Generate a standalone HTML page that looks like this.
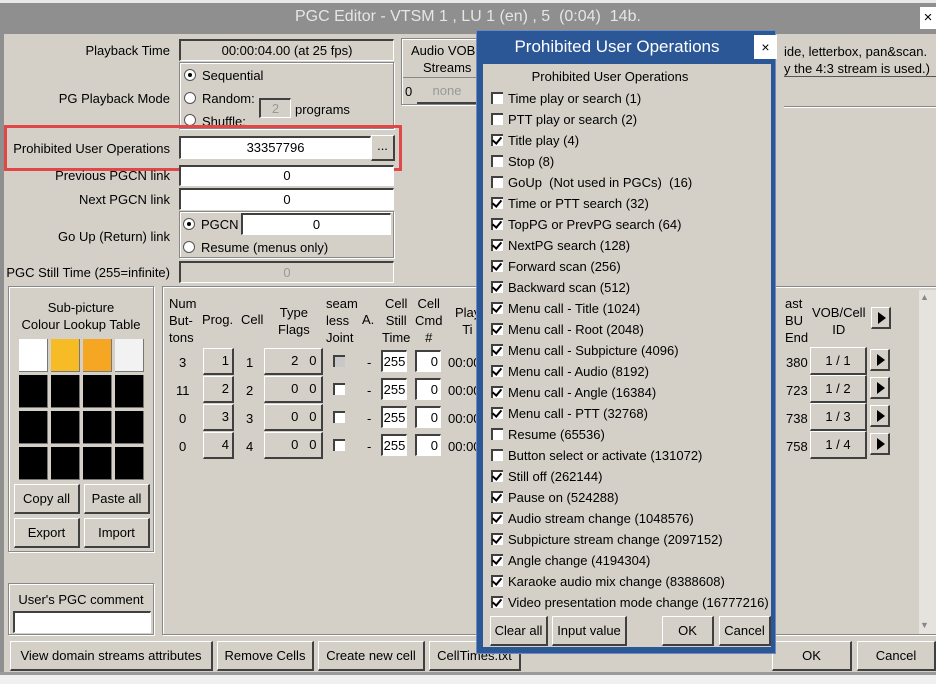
<!DOCTYPE html>
<html><head><meta charset="utf-8">
<style>
*{box-sizing:border-box;margin:0;padding:0}
body{width:936px;height:684px;overflow:hidden;background:#8f8f8f;font-family:"Liberation Sans",sans-serif;font-size:13px;color:#000;position:relative}
.a{position:absolute;white-space:nowrap}
.body{position:absolute;left:4px;top:34px;width:932px;height:638px;background:#d4d0c8}
.lbl{position:absolute;text-align:right;width:170px;left:0}
.sunk{position:absolute;border-top:2px solid #404040;border-left:2px solid #404040;border-right:1px solid #fff;border-bottom:1px solid #fff;text-align:center}
.wh{background:#fff}
.grp{position:absolute;border:1px solid #888;box-shadow:inset 1px 1px 0 #fff,1px 1px 0 #fff}
.btn{position:absolute;background:#d4d0c8;border-top:1px solid #fff;border-left:1px solid #fff;border-right:2px solid #404040;border-bottom:2px solid #404040;text-align:center}
.rad{position:absolute;width:12px;height:12px;border-radius:50%;background:#fff;border:1px solid #555}
.rad.on::after{content:"";position:absolute;left:3px;top:3px;width:4px;height:4px;border-radius:50%;background:#000}
.cb{position:absolute;width:12px;height:12px;background:#fff;border-top:2px solid #404040;border-left:2px solid #404040}
.cb.on::after{content:"";position:absolute;left:1px;top:-1px;width:4px;height:7px;border-right:2px solid #000;border-bottom:2px solid #000;transform:rotate(40deg)}
.sw{position:absolute;width:29px;height:33px;background:#000;border-right:1px solid #777;border-bottom:1px solid #777}
.arr{position:absolute;width:20px;height:22px;background:#d4d0c8;border-top:1px solid #fff;border-left:1px solid #fff;border-right:2px solid #404040;border-bottom:2px solid #404040}
.arr::after{content:"";position:absolute;left:6px;top:4px;border-left:8px solid #000;border-top:6px solid transparent;border-bottom:6px solid transparent}
</style></head><body>
<div class="a" style="left:0;top:0;width:936px;height:3px;background:#e8e8e8"></div>
<div class="a" style="left:295px;top:8px;font-size:16px;color:#e6e6e6">PGC Editor - VTSM 1 , LU 1 (en) , 5&nbsp; (0:04)&nbsp; 14b.</div>
<div class="a" style="left:920px;top:7px;width:16px;height:22px;background:#fff;font-size:15px;text-align:center;line-height:22px">×</div>
<div class="body"></div>
<div class="a" style="left:0;top:672px;width:936px;height:12px;background:#f0f0f0;border-top:3px solid #9a9a9a"></div>

<div class="lbl" style="top:43px">Playback Time</div>
<div class="sunk" style="left:179px;top:39px;width:215px;height:22px;line-height:19px">00:00:04.00 (at 25 fps)</div>
<div class="grp" style="left:179px;top:62px;width:215px;height:67px"></div>
<div class="lbl" style="top:91px">PG Playback Mode</div>
<div class="rad on" style="left:184px;top:69px"></div><div class="a" style="left:202px;top:68px">Sequential</div>
<div class="rad" style="left:184px;top:92px"></div><div class="a" style="left:202px;top:91px">Random:</div>
<div class="sunk" style="left:259px;top:98px;width:32px;height:20px;color:#999;line-height:17px">2</div>
<div class="a" style="left:295px;top:102px">programs</div>
<div class="rad" style="left:184px;top:114px"></div><div class="a" style="left:202px;top:114px;height:12px;overflow:hidden">Shuffle:</div>

<div class="lbl" style="top:141px">Prohibited User Operations</div>
<div class="sunk wh" style="left:179px;top:136px;width:192px;height:23px;line-height:20px">33357796</div>
<div class="btn" style="left:371px;top:135px;width:24px;height:26px;line-height:20px">...</div>
<div class="a" style="left:4px;top:125px;width:398px;height:46px;border:3px solid #e04848"></div>

<div class="lbl" style="top:168px;height:13px;overflow:hidden">Previous PGCN link</div>
<div class="sunk wh" style="left:179px;top:165px;width:215px;height:21px;line-height:17px">0</div>
<div class="lbl" style="top:192px">Next PGCN link</div>
<div class="sunk wh" style="left:179px;top:188px;width:215px;height:22px;line-height:19px">0</div>
<div class="grp" style="left:179px;top:211px;width:215px;height:47px"></div>
<div class="lbl" style="top:229px">Go Up (Return) link</div>
<div class="rad on" style="left:183px;top:218px"></div><div class="a" style="left:201px;top:217px">PGCN</div>
<div class="sunk wh" style="left:241px;top:213px;width:150px;height:22px;line-height:19px">0</div>
<div class="rad" style="left:183px;top:241px"></div><div class="a" style="left:201px;top:240px">Resume (menus only)</div>
<div class="lbl" style="top:265px">PGC Still Time (255=infinite)</div>
<div class="sunk" style="left:179px;top:261px;width:215px;height:22px;color:#999;line-height:19px">0</div>

<div class="grp" style="left:401px;top:38px;width:76px;height:67px"></div>
<div class="a" style="left:411px;top:43px">Audio VOB</div>
<div class="a" style="left:423px;top:60px">Streams</div>
<div class="a" style="left:403px;top:77px;width:74px;border-top:1px solid #888"></div>
<div class="a" style="left:405px;top:84px">0</div>
<div class="a" style="left:417px;top:79px;width:60px;height:25px;border-bottom:2px solid #404040;color:#999;text-align:center;line-height:24px">none</div>

<div class="a" style="left:784px;top:44px">ide, letterbox, pan&amp;scan.</div>
<div class="a" style="left:784px;top:61px">y the 4:3 stream is used.)</div>
<div class="a" style="left:784px;top:76px;width:152px;border-top:1px solid #555"></div>
<div class="a" style="left:784px;top:106px;width:152px;border-top:1px solid #888;box-shadow:0 1px 0 #fff"></div>

<div class="grp" style="left:8px;top:286px;width:146px;height:266px"></div>
<div class="a" style="left:8px;top:299px;width:146px;text-align:center;line-height:17px">Sub-picture<br>Colour Lookup Table</div>
<div class="sw" style="left:19px;top:339px;background:#fff"></div>
<div class="sw" style="left:51px;top:339px;background:#f7bb26"></div>
<div class="sw" style="left:83px;top:339px;background:#f5a623"></div>
<div class="sw" style="left:115px;top:339px;background:#f2f2f2"></div>
<div class="sw" style="left:19px;top:375px"></div><div class="sw" style="left:51px;top:375px"></div><div class="sw" style="left:83px;top:375px"></div><div class="sw" style="left:115px;top:375px"></div>
<div class="sw" style="left:19px;top:411px"></div><div class="sw" style="left:51px;top:411px"></div><div class="sw" style="left:83px;top:411px"></div><div class="sw" style="left:115px;top:411px"></div>
<div class="sw" style="left:19px;top:447px"></div><div class="sw" style="left:51px;top:447px"></div><div class="sw" style="left:83px;top:447px"></div><div class="sw" style="left:115px;top:447px"></div>
<div class="btn" style="left:14px;top:484px;width:66px;height:30px;line-height:27px">Copy all</div>
<div class="btn" style="left:84px;top:484px;width:66px;height:30px;line-height:27px">Paste all</div>
<div class="btn" style="left:14px;top:518px;width:66px;height:30px;line-height:27px">Export</div>
<div class="btn" style="left:84px;top:518px;width:66px;height:30px;line-height:27px">Import</div>
<div class="grp" style="left:8px;top:583px;width:146px;height:52px"></div>
<div class="a" style="left:8px;top:592px;width:146px;text-align:center">User's PGC comment</div>
<div class="sunk wh" style="left:13px;top:611px;width:138px;height:22px"></div>

<div class="grp" style="left:162px;top:286px;width:775px;height:349px"></div>
<div class="a" style="left:919px;top:290px;width:17px;height:344px;background:#e6e3de"></div>
<div class="a" style="left:920px;top:292px;font-size:9px;color:#888">▲</div>
<div class="a" style="left:920px;top:620px;font-size:9px;color:#888">▼</div>
<div class="a" style="left:169px;top:295px;line-height:17px">Num<br>But-<br>tons</div>
<div class="a" style="left:202px;top:312px">Prog.</div>
<div class="a" style="left:241px;top:312px">Cell</div>
<div class="a" style="left:278px;top:304px;line-height:17px;text-align:center">Type<br>Flags</div>
<div class="a" style="left:326px;top:295px;line-height:17px">seam<br>less<br>Joint</div>
<div class="a" style="left:362px;top:312px">A.</div>
<div class="a" style="left:382px;top:295px;line-height:17px;text-align:center">Cell<br>Still<br>Time</div>
<div class="a" style="left:415px;top:295px;line-height:17px;text-align:center">Cell<br>Cmd<br>#</div>
<div class="a" style="left:455px;top:304px;line-height:17px">Play<br>&nbsp;&nbsp;Ti</div>

<div class="a" style="left:785px;top:295px;line-height:17px">ast<br>BU<br>End</div>
<div class="a" style="left:812px;top:304px;line-height:17px;text-align:center">VOB/Cell<br>ID</div>
<div class="arr" style="left:871px;top:307px"></div>

<div class="a" style="left:179px;top:355px">3</div><div class="a" style="left:176px;top:383px">11</div><div class="a" style="left:179px;top:411px">0</div><div class="a" style="left:179px;top:439px">0</div>
<div class="btn" style="left:203px;top:348px;width:31px;height:27px;text-align:right;padding-right:3px;line-height:24px">1</div>
<div class="btn" style="left:203px;top:376px;width:31px;height:27px;text-align:right;padding-right:3px;line-height:24px">2</div>
<div class="btn" style="left:203px;top:404px;width:31px;height:27px;text-align:right;padding-right:3px;line-height:24px">3</div>
<div class="btn" style="left:203px;top:432px;width:31px;height:27px;text-align:right;padding-right:3px;line-height:24px">4</div>
<div class="a" style="left:246px;top:355px">1</div><div class="a" style="left:246px;top:383px">2</div><div class="a" style="left:246px;top:411px">3</div><div class="a" style="left:246px;top:439px">4</div>
<div class="btn" style="left:264px;top:348px;width:59px;height:27px;line-height:24px">&nbsp;&nbsp;&nbsp;&nbsp;&nbsp;&nbsp;2&nbsp;&nbsp;&nbsp;0</div>
<div class="btn" style="left:264px;top:376px;width:59px;height:27px;line-height:24px">&nbsp;&nbsp;&nbsp;&nbsp;&nbsp;&nbsp;0&nbsp;&nbsp;&nbsp;0</div>
<div class="btn" style="left:264px;top:404px;width:59px;height:27px;line-height:24px">&nbsp;&nbsp;&nbsp;&nbsp;&nbsp;&nbsp;0&nbsp;&nbsp;&nbsp;0</div>
<div class="btn" style="left:264px;top:432px;width:59px;height:27px;line-height:24px">&nbsp;&nbsp;&nbsp;&nbsp;&nbsp;&nbsp;0&nbsp;&nbsp;&nbsp;0</div>
<div class="cb" style="left:333px;top:355px;background:#c8c8c8"></div>
<div class="cb" style="left:333px;top:383px"></div><div class="cb" style="left:333px;top:411px"></div><div class="cb" style="left:333px;top:439px"></div>
<div class="a" style="left:367px;top:355px">-</div><div class="a" style="left:367px;top:383px">-</div><div class="a" style="left:367px;top:411px">-</div><div class="a" style="left:367px;top:439px">-</div>
<div class="sunk wh" style="left:381px;top:350px;width:26px;height:22px;line-height:19px">255</div>
<div class="sunk wh" style="left:381px;top:378px;width:26px;height:22px;line-height:19px">255</div>
<div class="sunk wh" style="left:381px;top:406px;width:26px;height:22px;line-height:19px">255</div>
<div class="sunk wh" style="left:381px;top:434px;width:26px;height:22px;line-height:19px">255</div>
<div class="sunk wh" style="left:415px;top:350px;width:26px;height:22px;line-height:19px;text-align:right;padding-right:2px">0</div>
<div class="sunk wh" style="left:415px;top:378px;width:26px;height:22px;line-height:19px;text-align:right;padding-right:2px">0</div>
<div class="sunk wh" style="left:415px;top:406px;width:26px;height:22px;line-height:19px;text-align:right;padding-right:2px">0</div>
<div class="sunk wh" style="left:415px;top:434px;width:26px;height:22px;line-height:19px;text-align:right;padding-right:2px">0</div>
<div class="a" style="left:448px;top:355px">00:00</div><div class="a" style="left:448px;top:383px">00:00</div><div class="a" style="left:448px;top:411px">00:00</div><div class="a" style="left:448px;top:439px">00:00</div>

<div class="a" style="left:786px;top:355px">380</div><div class="a" style="left:786px;top:383px">723</div><div class="a" style="left:786px;top:411px">738</div><div class="a" style="left:786px;top:439px">758</div>
<div class="btn" style="left:810px;top:347px;width:57px;height:28px;line-height:25px">1 / 1</div>
<div class="btn" style="left:810px;top:375px;width:57px;height:28px;line-height:25px">1 / 2</div>
<div class="btn" style="left:810px;top:403px;width:57px;height:28px;line-height:25px">1 / 3</div>
<div class="btn" style="left:810px;top:431px;width:57px;height:28px;line-height:25px">1 / 4</div>
<div class="arr" style="left:870px;top:349px"></div><div class="arr" style="left:870px;top:377px"></div><div class="arr" style="left:870px;top:405px"></div><div class="arr" style="left:870px;top:433px"></div>

<div class="btn" style="left:10px;top:641px;width:203px;height:30px;line-height:27px">View domain streams attributes</div>
<div class="btn" style="left:217px;top:641px;width:97px;height:30px;line-height:27px">Remove Cells</div>
<div class="btn" style="left:318px;top:641px;width:107px;height:30px;line-height:27px">Create new cell</div>
<div class="btn" style="left:429px;top:641px;width:92px;height:30px;line-height:27px">CellTimes.txt</div>
<div class="btn" style="left:772px;top:641px;width:80px;height:30px;line-height:27px">OK</div>
<div class="btn" style="left:857px;top:641px;width:79px;height:30px;line-height:27px">Cancel</div>

<div class="a" style="left:476px;top:30px;width:300px;height:624px;background:#2b5797;border:1px solid #6c8cc0"></div>
<div class="a" style="left:482px;top:37px;width:270px;text-align:center;font-size:17px;color:#fff">Prohibited User Operations</div>
<div class="a" style="left:754px;top:35px;width:23px;height:24px;background:#fff;text-align:center;line-height:24px;font-size:14px">×</div>
<div class="a" style="left:483px;top:64px;width:288px;height:583px;background:#d4d0c8"></div>
<div class="a" style="left:483px;top:69px;width:254px;text-align:center">Prohibited User Operations</div>
<div class="cb" style="left:491px;top:92px"></div><div class="a" style="left:508px;top:91px">Time play or search (1)</div>
<div class="cb" style="left:491px;top:113px"></div><div class="a" style="left:508px;top:112px">PTT play or search (2)</div>
<div class="cb on" style="left:491px;top:134px"></div><div class="a" style="left:508px;top:133px">Title play (4)</div>
<div class="cb" style="left:491px;top:155px"></div><div class="a" style="left:508px;top:154px">Stop (8)</div>
<div class="cb" style="left:491px;top:176px"></div><div class="a" style="left:508px;top:175px">GoUp&nbsp; (Not used in PGCs)&nbsp; (16)</div>
<div class="cb on" style="left:491px;top:197px"></div><div class="a" style="left:508px;top:196px">Time or PTT search (32)</div>
<div class="cb on" style="left:491px;top:218px"></div><div class="a" style="left:508px;top:217px">TopPG or PrevPG search (64)</div>
<div class="cb on" style="left:491px;top:239px"></div><div class="a" style="left:508px;top:238px">NextPG search (128)</div>
<div class="cb on" style="left:491px;top:260px"></div><div class="a" style="left:508px;top:259px">Forward scan (256)</div>
<div class="cb on" style="left:491px;top:281px"></div><div class="a" style="left:508px;top:280px">Backward scan (512)</div>
<div class="cb on" style="left:491px;top:302px"></div><div class="a" style="left:508px;top:301px">Menu call - Title (1024)</div>
<div class="cb on" style="left:491px;top:323px"></div><div class="a" style="left:508px;top:322px">Menu call - Root (2048)</div>
<div class="cb on" style="left:491px;top:344px"></div><div class="a" style="left:508px;top:343px">Menu call - Subpicture (4096)</div>
<div class="cb on" style="left:491px;top:365px"></div><div class="a" style="left:508px;top:364px">Menu call - Audio (8192)</div>
<div class="cb on" style="left:491px;top:386px"></div><div class="a" style="left:508px;top:385px">Menu call - Angle (16384)</div>
<div class="cb on" style="left:491px;top:407px"></div><div class="a" style="left:508px;top:406px">Menu call - PTT (32768)</div>
<div class="cb" style="left:491px;top:428px"></div><div class="a" style="left:508px;top:427px">Resume (65536)</div>
<div class="cb" style="left:491px;top:449px"></div><div class="a" style="left:508px;top:448px">Button select or activate (131072)</div>
<div class="cb on" style="left:491px;top:470px"></div><div class="a" style="left:508px;top:469px">Still off (262144)</div>
<div class="cb on" style="left:491px;top:491px"></div><div class="a" style="left:508px;top:490px">Pause on (524288)</div>
<div class="cb on" style="left:491px;top:512px"></div><div class="a" style="left:508px;top:511px">Audio stream change (1048576)</div>
<div class="cb on" style="left:491px;top:533px"></div><div class="a" style="left:508px;top:532px">Subpicture stream change (2097152)</div>
<div class="cb on" style="left:491px;top:554px"></div><div class="a" style="left:508px;top:553px">Angle change (4194304)</div>
<div class="cb on" style="left:491px;top:575px"></div><div class="a" style="left:508px;top:574px">Karaoke audio mix change (8388608)</div>
<div class="cb on" style="left:491px;top:596px"></div><div class="a" style="left:508px;top:595px">Video presentation mode change (16777216)</div>
<div class="btn" style="left:490px;top:616px;width:58px;height:30px;line-height:27px">Clear all</div>
<div class="btn" style="left:552px;top:616px;width:75px;height:30px;line-height:27px">Input value</div>
<div class="btn" style="left:662px;top:616px;width:52px;height:30px;line-height:27px">OK</div>
<div class="btn" style="left:719px;top:616px;width:52px;height:30px;line-height:27px">Cancel</div>
</body></html>
